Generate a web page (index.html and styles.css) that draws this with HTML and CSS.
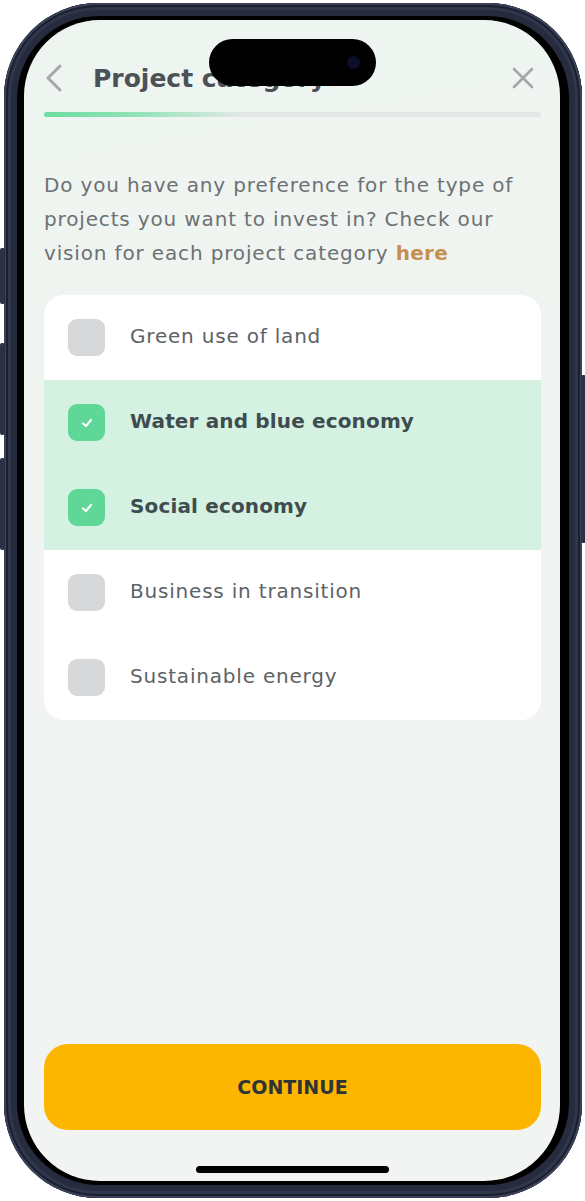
FILE: index.html
```
<!DOCTYPE html>
<html>
	<head>
		<meta charset="utf-8">
		<title>Project category</title>
		<link rel="stylesheet" href="styles.css">
	</head>
	<body>
		<div class="phone">
			<span class="side-btn side-action"></span>
			<span class="side-btn side-vol-up"></span>
			<span class="side-btn side-vol-down"></span>
			<span class="side-btn side-power"></span>
			<div class="bezel">
				<div class="screen">
					<div class="island"><span class="camera"></span></div>

					<div class="topbar">
						<svg class="back" width="16" height="28" viewBox="0 0 16 28">
							<polyline points="14,2 2,14 14,26" fill="none" stroke="#a5a8aa" stroke-width="3" stroke-linecap="round" stroke-linejoin="round"/>
						</svg>
						<h1 class="title">Project category</h1>
						<svg class="close" width="22" height="22" viewBox="0 0 22 22">
							<path d="M2 2 L20 20 M20 2 L2 20" fill="none" stroke="#a5a8aa" stroke-width="2.6" stroke-linecap="round"/>
						</svg>
					</div>
					<div class="progress"><div class="progress-fill"></div></div>

					<p class="intro">Do you have any preference for the type of projects you want to invest in? Check our vision for each project category <a class="link" href="#">here</a></p>

					<ul class="options">
						<li class="option">
							<span class="box"></span>
							<span class="label">Green use of land</span>
						</li>
						<li class="option checked">
							<span class="box">
								<svg width="14" height="14" viewBox="0 0 14 14"><polyline points="3,7.5 6,10 11,4" fill="none" stroke="#fff" stroke-width="2.2" stroke-linecap="round" stroke-linejoin="round"/></svg>
							</span>
							<span class="label">Water and blue economy</span>
						</li>
						<li class="option checked">
							<span class="box">
								<svg width="14" height="14" viewBox="0 0 14 14"><polyline points="3,7.5 6,10 11,4" fill="none" stroke="#fff" stroke-width="2.2" stroke-linecap="round" stroke-linejoin="round"/></svg>
							</span>
							<span class="label">Social economy</span>
						</li>
						<li class="option">
							<span class="box"></span>
							<span class="label">Business in transition</span>
						</li>
						<li class="option">
							<span class="box"></span>
							<span class="label">Sustainable energy</span>
						</li>
					</ul>

					<div class="spacer"></div>
					<button class="continue">CONTINUE</button>
					<div class="home-bar"></div>
				</div>
			</div>
		</div>
	</body>
</html>
```

FILE: styles.css
```
* {
	box-sizing: border-box;
}

body {
	margin: 0;
	background: #ffffff;
	font-family: "DejaVu Sans", "Open Sans", sans-serif;
}

.phone {
	position: relative;
	width: 578px;
	height: 1195px;
	margin: 3px 0 0 4px;
	padding: 13px;
	border-radius: 94px;
	background: #262b3e;
	box-shadow: inset 0 0 0 2px #3c425a, inset 0 0 0 4px #1b1f2e, inset 0 0 0 7px #30364b;
}

.side-btn {
	position: absolute;
	width: 5px;
	background: #2c3246;
	border-radius: 2px;
}

.side-action {
	left: -4px;
	top: 245px;
	height: 56px;
}

.side-vol-up {
	left: -4px;
	top: 340px;
	height: 92px;
}

.side-vol-down {
	left: -4px;
	top: 455px;
	height: 92px;
}

.side-power {
	right: -4px;
	top: 372px;
	height: 168px;
}

.bezel {
	height: 100%;
	padding: 4px 9px 4px 7px;
	border-radius: 82px;
	background: #000000;
}

.screen {
	position: relative;
	display: flex;
	flex-direction: column;
	height: 100%;
	padding: 0 19px 0 20px;
	border-radius: 76px;
	background: linear-gradient(170deg, #eef5f0 0%, #f1f4f2 45%, #f2f4f2 100%);
	overflow: hidden;
}

.island {
	position: absolute;
	left: 185px;
	top: 19px;
	width: 167px;
	height: 47px;
	border-radius: 24px;
	background: #000000;
	z-index: 2;
}

.camera {
	position: absolute;
	right: 16px;
	top: 17px;
	width: 13px;
	height: 13px;
	border-radius: 50%;
	background: #0d0f2a;
}

.topbar {
	display: flex;
	align-items: center;
	height: 36px;
	margin-top: 40px;
}

.back {
	margin-left: 2px;
}

.title {
	flex: 1;
	margin: 0 0 0 31px;
	font-size: 25px;
	font-weight: 700;
	color: #4b5157;
}

.close {
	margin-right: 7px;
}

.progress {
	height: 5px;
	margin-top: 16px;
	border-radius: 3px;
	background: #e5e8e7;
}

.progress-fill {
	width: 200px;
	height: 100%;
	border-radius: 3px;
	background: linear-gradient(90deg, #6cdca0 0%, #8fe3b6 45%, rgba(229, 232, 231, 0) 100%);
}

.intro {
	margin: 51px 0 0 0;
	font-size: 20px;
	line-height: 34px;
	color: #6d7174;
	letter-spacing: 0.85px;
}

.link {
	display: inline-block;
	line-height: 26px;
	font-weight: 700;
	color: #c4904f;
	text-decoration: none;
	letter-spacing: 0.3px;
}

.options {
	list-style: none;
	margin: 25px 0 0 0;
	padding: 0;
	border-radius: 20px;
	background: #ffffff;
	overflow: hidden;
}

.option {
	display: flex;
	align-items: center;
	height: 85px;
	padding-left: 24px;
}

.option.checked {
	background: #d5f1e2;
}

.box {
	display: flex;
	align-items: center;
	justify-content: center;
	width: 37px;
	height: 37px;
	border-radius: 9px;
	background: #d6d8da;
}

.checked .box {
	background: #5fd796;
}

.label {
	margin-left: 25px;
	padding-bottom: 3px;
	font-size: 20px;
	color: #5d6266;
	letter-spacing: 0.8px;
}

.checked .label {
	font-weight: 700;
	color: #3f4c4f;
	letter-spacing: 0.15px;
}

.spacer {
	flex: 1;
}

.continue {
	height: 86px;
	border: none;
	border-radius: 24px;
	background: #fdb600;
	font-family: inherit;
	font-size: 19px;
	font-weight: 700;
	color: #2d3436;
}

.home-bar {
	align-self: center;
	width: 193px;
	height: 7px;
	margin: 36px 0 8px 0;
	border-radius: 4px;
	background: #000000;
}
```
